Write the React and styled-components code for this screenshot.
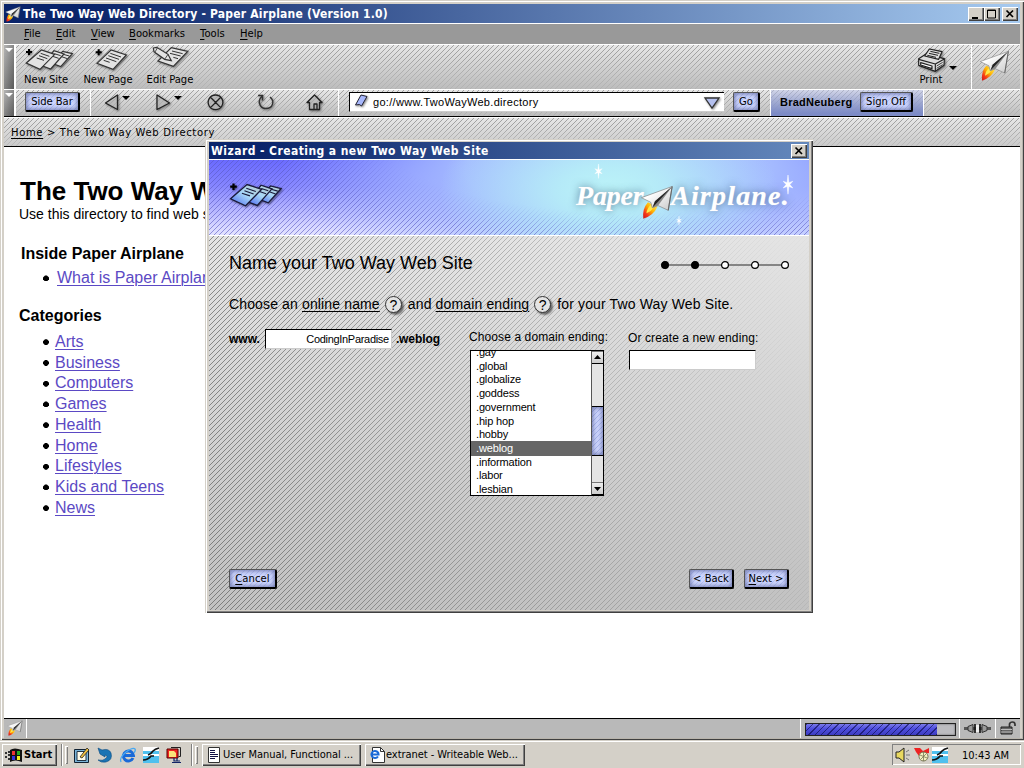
import React from 'react';
import styled, { createGlobalStyle, css } from 'styled-components';

const Global = createGlobalStyle`
  * { box-sizing: border-box; }
  body { margin: 0; background: #d4d0c8; color: #000; font-family: "Liberation Sans", Arial, sans-serif; }
  svg { display: block; flex: none; overflow: visible; }
`;

const ui = '"DejaVu Sans", Verdana, sans-serif';
const tahoma = '"DejaVu Sans Condensed", "DejaVu Sans", Tahoma, sans-serif';

const hatch = (color) =>
  `url("data:image/svg+xml,%3Csvg xmlns='http://www.w3.org/2000/svg' width='5' height='5' shape-rendering='crispEdges'%3E%3Cpath d='M0 4h1v1h-1zM1 3h1v1h-1zM2 2h1v1h-1zM3 1h1v1h-1zM4 0h1v1h-1z' fill='%23${color}'/%3E%3C/svg%3E")`;

const striped = css`
  position: relative;
  isolation: isolate;
  &::before {
    content: '';
    position: absolute;
    inset: 0;
    z-index: -1;
    background: ${hatch('a2a2a2')};
    mask-image: linear-gradient(#000 30%, rgba(0, 0, 0, 0.35));
  }
`;

const Screen = styled.div`
  width: 1024px;
  height: 768px;
  display: flex;
  flex-direction: column;
  overflow: hidden;
  position: relative;
`;
const Window = styled.div`
  height: 740px;
  padding: 4px 4px 2px;
  background: #d4d0c8;
  box-shadow: inset 1px 1px #d4d0c8, inset 2px 2px #fff, inset -1px -1px #404040, inset -2px -2px #b8b4ac;
  display: flex;
  flex-direction: column;
`;
const TitleBar = styled.div`
  height: ${(p) => p.$h || 20}px;
  flex: none;
  border-bottom: 1px solid #fff;
  background: linear-gradient(90deg, #0a246a 8%, ${(p) => p.$end || '#a6caf0'});
  display: flex;
  align-items: center;
  gap: 2px;
  padding: 0 2px 0 ${(p) => p.$pad ?? 1}px;
  color: #fff;
`;
const TitleText = styled.div`
  flex: 1;
  font: bold ${(p) => p.$size || 12}px/18px ${tahoma};
  letter-spacing: ${(p) => p.$ls || 0}px;
  white-space: nowrap;
`;
const Control = styled.div`
  width: 16px;
  height: 14px;
  margin-left: ${(p) => p.$gap || -2}px;
  background: #d4d0c8;
  box-shadow: inset 1px 1px #fff, inset -1px -1px #404040, inset -2px -2px #808080;
`;
const MenuBar = styled.div`
  height: 21px;
  flex: none;
  background: #999;
  border-bottom: 1px solid #fff;
  display: flex;
  padding-left: 20px;
  font: 10px/19px ${ui};
`;
const MenuItem = styled.div`
  width: ${(p) => p.$w}px;
  letter-spacing: ${(p) => p.$ls || 0}px;
`;
const Key = styled.span`
  text-decoration: underline;
  text-underline-offset: 2px;
  text-decoration-thickness: 1px;
`;
const Bar = styled.div`
  ${striped}
  height: ${(p) => p.$h}px;
  flex: none;
  display: flex;
  background: linear-gradient(#e6e6e6, ${(p) => p.$end || '#bcbcbc'});
  border-bottom: 1px solid ${(p) => p.$line || '#fff'};
  border-top: ${(p) => (p.$top ? '1px solid #fff' : '0')};
`;
const Grip = styled.div`
  width: 12px;
  border-right: 2px solid #fff;
  background: linear-gradient(90deg, rgba(255, 255, 255, 0.15), rgba(0, 0, 0, 0.2)), linear-gradient(#a8a8a8, #707070);
  padding: 3px 0 0 2px;
`;
const Tool = styled.div`
  width: ${(p) => p.$w}px;
  margin-left: ${(p) => p.$ml || 0}px;
  display: flex;
  flex-direction: column;
  align-items: ${(p) => p.$align || 'center'};
  font: 10px/12px ${ui};
  letter-spacing: ${(p) => p.$ls || 0}px;
  white-space: nowrap;
`;
const ToolIcon = styled.div`
  height: 29px;
  display: flex;
  align-items: flex-start;
  padding: 3px 0 0 ${(p) => p.$pl || 0}px;
`;
const Caret = styled.div`
  border: 4px solid transparent;
  border-top-color: ${(p) => p.$c || '#000'};
  border-bottom: 0;
  width: 0;
  height: 0;
  margin: ${(p) => p.$m || 0};
`;
const LogoCell = styled.div`
  margin-left: auto;
  width: 49px;
  border-left: 1px solid #fff;
  padding: 5px 0 0 7px;
`;
const Button = styled.div`
  flex: none;
  width: ${(p) => p.$w}px;
  height: 20px;
  border: 1px solid #000;
  border-top-color: #555;
  border-left-color: #555;
  border-right-width: 2px;
  border-bottom-width: 2px;
  border-radius: 2px;
  background: ${hatch('b4c0f4')} , #cdd5fd;
  box-shadow: inset 0 0 4px 1px rgba(50, 60, 120, 0.6);
  font: 10px/17px ${ui};
  letter-spacing: ${(p) => p.$ls || 0}px;
  text-align: center;
  white-space: nowrap;
`;
const NavGroup = styled.div`
  display: flex;
  align-items: flex-start;
  width: 249px;
  margin-left: 10px;
  padding-left: 13px;
  border: solid #fff;
  border-width: 0 1px;
`;
const Place = styled.div`
  width: ${(p) => p.$w}px;
  padding-top: ${(p) => p.$t || 0}px;
  padding-left: ${(p) => p.$l || 0}px;
  display: flex;
  gap: 3px;
`;
const Address = styled.div`
  width: 375px;
  height: 20px;
  margin: 2px 0 0 10px;
  background: #fff;
  border: solid #000;
  border-width: 1px 0 0 1px;
  border-bottom: 1px solid #ccc;
  display: flex;
  padding-left: 4px;
  font-size: 11px;
  line-height: 18px;
`;
const Url = styled.div`
  flex: 1;
  padding-left: 3px;
  letter-spacing: 0.3px;
`;
const Grow = styled.div`
  flex: 1;
`;
const Account = styled.div`
  width: 154px;
  margin-left: 10px;
  padding: 2px 0 0 9px;
  border: solid #fff;
  border-width: 0 1px;
  background: linear-gradient(rgba(190, 198, 236, 0.5), #7d8bc6 90%);
  display: flex;
`;
const Bold = styled.div`
  font-weight: bold;
  font-size: ${(p) => p.$size || 11}px;
  line-height: 20px;
  letter-spacing: ${(p) => p.$ls || 0}px;
  width: ${(p) => (p.$w ? p.$w + 'px' : 'auto')};
`;
const Crumbs = styled.div`
  font: 10px/14px ${ui};
  letter-spacing: 0.64px;
  padding: 8px 0 0 7px;
`;
const Content = styled.div`
  flex: 1;
  background: #fff;
  padding: 29px 0 0 15px;
  white-space: nowrap;
`;
const H1 = styled.div`
  font-weight: bold;
  font-size: 26px;
  line-height: 30px;
  padding-left: 1px;
`;
const Sub = styled.div`
  font-size: 14px;
  line-height: 16px;
`;
const H2 = styled.div`
  font-weight: bold;
  font-size: 16px;
  line-height: 20px;
  margin: ${(p) => p.$m};
`;
const List = styled.div`
  margin-left: ${(p) => p.$ml}px;
`;
const Entry = styled.div`
  display: flex;
  align-items: center;
  gap: ${(p) => p.$gap || 6}px;
  height: 20.75px;
  line-height: 20.75px;
  font-size: 16px;
  color: #5b49c4;
  text-decoration: underline;
  text-underline-offset: 2px;
  text-decoration-thickness: 1px;
  &::before {
    content: '';
    width: 6px;
    height: 6px;
    background: #000;
    clip-path: polygon(34% 0, 66% 0, 100% 34%, 100% 66%, 66% 100%, 34% 100%, 0 66%, 0 34%);
  }
`;
const StatusBar = styled.div`
  height: 20px;
  flex: none;
  background: #b9b9b9;
  border-top: 1px solid #000;
  display: flex;
`;
const StatusCell = styled.div`
  width: ${(p) => p.$w}px;
  flex: ${(p) => (p.$w ? 'none' : 1)};
  border: solid #fff;
  border-width: 0 ${(p) => (p.$r ? 1 : 0)}px 0 ${(p) => (p.$l ? 1 : 0)}px;
  padding: ${(p) => p.$p || 0};
`;
const Progress = styled.div`
  width: 151px;
  height: 13px;
  border: 1px solid #222;
  background: #bcbcc0;
  box-shadow: inset 0 0 2px #555;
`;
const ProgressFill = styled.div`
  width: 131px;
  height: 11px;
  background: repeating-linear-gradient(135deg, rgba(0, 0, 60, 0.55) 0 1px, transparent 1px 4.5px),
    linear-gradient(#7a7ae8, #5050e0 40%, #3c3cc0);
`;

const Dialog = styled.div`
  position: absolute;
  left: 205px;
  top: 139px;
  width: 608px;
  height: 474px;
  padding: 3px 4px;
  background: #d4d0c8;
  box-shadow: inset 1px 1px #d4d0c8, inset 2px 2px #fff, inset -1px -1px #404040, inset -2px -2px #808080;
  display: flex;
  flex-direction: column;
`;
const Banner = styled.div`
  position: relative;
  isolation: isolate;
  height: 76px;
  flex: none;
  border-bottom: 1px solid #fff;
  display: flex;
  background: radial-gradient(ellipse 170px 90px at 400px 32px, #bcf4f8, rgba(184, 244, 246, 0.8) 30%, rgba(184, 244, 246, 0)),
    radial-gradient(ellipse 340px 120px at 410px 10px, #acc8ff, #a4baff 45%, rgba(120, 124, 255, 0) 100%),
    linear-gradient(#6a6aff, #8686ff 35%, #d8d8ff 90%, #e2e2ff);
  &::before {
    content: '';
    position: absolute;
    inset: 0;
    z-index: -1;
    background: ${hatch('5a5ac4')};
    opacity: 0.6;
    mask-image: radial-gradient(ellipse 330px 90px at 430px -15px, transparent 75%, #000 105%);
  }
`;
const BannerIcon = styled.div`
  padding: 22px 0 0 19px;
`;
const Wordmark = styled.div`
  position: relative;
  display: flex;
  font: italic bold 28px/34px "Liberation Serif", "Times New Roman", serif;
  color: #fff;
  text-shadow: 0 0 9px rgba(50, 80, 120, 0.75), 0 0 1px #fff;
  margin: 19px 0 0 292px;
  height: 34px;
`;
const Word = styled.span`
  width: ${(p) => p.$w}px;
  letter-spacing: ${(p) => p.$ls}px;
`;
const Floating = styled.div`
  position: absolute;
  left: ${(p) => p.$x}px;
  top: ${(p) => p.$y}px;
`;
const Body = styled.div`
  ${striped}
  flex: 1;
  background: linear-gradient(#e4e4e4, #c4c4c4 90%, #c2c2c2);
  display: flex;
  flex-direction: column;
  padding: 0 20px 21px;
  white-space: nowrap;
  &::before {
    background: ${hatch('7c7c7c')};
    mask-image: linear-gradient(75deg, #000, rgba(0, 0, 0, 0.42) 60%, rgba(0, 0, 0, 0.04) 95%);
  }
`;
const TopRow = styled.div`
  display: flex;
  justify-content: space-between;
  padding-top: 15px;
`;
const StepTitle = styled.div`
  font-size: 18px;
  line-height: 24px;
`;
const Sentence = styled.div`
  display: flex;
  align-items: center;
  margin-top: 19px;
  height: 20px;
  font-size: 14px;
  line-height: 20px;
  letter-spacing: 0.14px;
`;
const Term = styled.span`
  text-decoration: underline;
  text-underline-offset: 2px;
  text-decoration-thickness: 1px;
  margin-left: 4px;
`;
const Help = styled.span`
  width: 17px;
  height: 17px;
  margin: 0 6px 0 5px;
  border: 1px solid #333;
  border-radius: 9px;
  background: #e4e4e4;
  box-shadow: 2px 2px 2px rgba(0, 0, 0, 0.5);
  font-size: 14px;
  line-height: 16px;
  letter-spacing: 0;
  text-align: center;
`;
const Fields = styled.div`
  display: flex;
  align-items: flex-start;
  margin-top: 14px;
  flex: 1;
`;
const NameRow = styled.div`
  display: flex;
  width: 240px;
  gap: 4px;
  padding-top: 1px;
`;
const Input = styled.div`
  width: 127px;
  height: 20px;
  margin-left: 1px;
  background: #fff;
  border-top: 1px solid #000;
  border-left: 1px solid #000;
  border-right: 1px solid #ccc;
  border-bottom: 1px solid #ccc;
  font-size: 11px;
  line-height: 18px;
  letter-spacing: -0.3px;
  text-align: right;
  padding-right: 2px;
`;
const Column = styled.div`
  width: ${(p) => p.$w}px;
  padding-top: ${(p) => p.$t || 0}px;
`;
const Label = styled.div`
  font-size: 12px;
  line-height: 18px;
  letter-spacing: 0.1px;
  margin-bottom: ${(p) => p.$mb}px;
`;
const ListBox = styled.div`
  width: 134px;
  height: 146px;
  margin-left: 1px;
  border: 1px solid #000;
  background: #fff;
  display: flex;
  overflow: hidden;
`;
const Options = styled.div`
  flex: 1;
  margin-top: -5px;
`;
const Option = styled.div`
  height: 13.72px;
  line-height: 13.72px;
  padding-left: 5px;
  font-size: 11px;
  letter-spacing: -0.15px;
  background: ${(p) => (p.$on ? '#666' : 'transparent')};
  color: ${(p) => (p.$on ? '#fff' : '#000')};
  box-shadow: ${(p) => (p.$on ? '0 -1px #666' : 'none')};
`;
const Scroll = styled.div`
  width: 12px;
  border-left: 1px solid #555;
  background: #e4e4e4;
  display: flex;
  flex-direction: column;
`;
const ScrollButton = styled.div`
  height: 13px;
  background: linear-gradient(#eee, #ccc);
  border-bottom: 1px solid #000;
  border-top: 1px solid #777;
  display: flex;
  align-items: center;
  justify-content: center;
`;
const Thumb = styled.div`
  height: 51px;
  margin: 42px 0 26px;
  border: solid #000;
  border-width: 1px 0 1px;
  background: ${hatch('a8b4ec')} , #ccd4fc;
  box-shadow: inset 0 0 4px 1px rgba(50, 60, 120, 0.6);
`;
const Footer = styled.div`
  display: flex;
  gap: 10px;
`;

const Taskbar = styled.div`
  height: 28px;
  flex: none;
  border-top: 1px solid #d4d0c8;
  box-shadow: inset 0 1px #fff;
  background: #d4d0c8;
  display: flex;
  align-items: flex-start;
  padding: 3px 2px 0;
  font: 11px/20px ${tahoma};
`;
const TaskButton = styled.div`
  width: ${(p) => p.$w}px;
  flex: none;
  height: 22px;
  margin-right: ${(p) => p.$mr || 0}px;
  padding-left: ${(p) => p.$pl || 4}px;
  display: flex;
  align-items: center;
  gap: 1px;
  box-shadow: inset 1px 1px #fff, inset -1px -1px #404040, inset -2px -2px #808080;
  font-weight: ${(p) => (p.$bold ? 'bold' : 'normal')};
  letter-spacing: ${(p) => p.$ls || 0}px;
  white-space: nowrap;
`;
const Divider = styled.div`
  width: 1px;
  height: 22px;
  background: #808080;
  box-shadow: 1px 0 #fff;
  margin-right: ${(p) => p.$mr}px;
`;
const Handle = styled.div`
  width: 3px;
  height: 18px;
  margin: 2px ${(p) => p.$mr}px 0 0;
  box-shadow: inset 1px 1px #fff, inset -1px -1px #808080;
`;
const Quick = styled.div`
  display: flex;
  gap: 7px;
  padding-top: 3px;
  width: 117px;
`;
const Tray = styled.div`
  margin-left: auto;
  margin-right: 1px;
  width: 129px;
  height: 21px;
  box-shadow: inset 1px 1px #808080, inset -1px -1px #fff;
  display: flex;
  align-items: center;
  padding-left: 3px;
  gap: 2px;
`;
const Clock = styled.div`
  margin-left: 12px;
  padding-top: 2px;
  white-space: nowrap;
`;

function Plane({ size = 30 }) {
  return (
    <svg width={size} height={size} viewBox="896 148 94 94">
      <defs>
        <linearGradient id="flame" x1="1" y1="0" x2="0" y2="1">
          <stop offset="0" stopColor="#fff36a" />
          <stop offset="0.45" stopColor="#ffb400" />
          <stop offset="0.75" stopColor="#f5361a" />
          <stop offset="1" stopColor="#c81818" />
        </linearGradient>
        <linearGradient id="wing" x1="0" y1="0" x2="1" y2="1">
          <stop offset="0.3" stopColor="#fff" />
          <stop offset="1" stopColor="#c9c9c9" />
        </linearGradient>
      </defs>
      <path d="M918 196 Q902 214 905 241 Q934 232 944 208 Z" fill="url(#flame)" />
      <path d="M924 204 Q914 216 914 226 Q928 220 936 208 Z" fill="#ffe94a" />
      <path d="M900 183 L985 152 L974 218 L946 205 L930 211 L926 196 Z" fill="url(#wing)" stroke="#888" strokeWidth="2" />
      <path d="M985 152 L946 205 L932 210 L936 194 Z" fill="#8a8a8a" />
      <path d="M985 152 L930 211 L938 192 Z" fill="#222" />
      <path d="M985 152 L974 218" stroke="#666" strokeWidth="3" />
    </svg>
  );
}

const shadow = { filter: 'drop-shadow(1px 1px 1px rgba(0,0,0,.5))' };

function Sheets({ blue }) {
  const fill = blue ? 'url(#sheet)' : '#e2e2e2';
  const ink = blue ? '#1a1a3a' : '#333';
  return (
    <svg width={blue ? 56 : 51} height={blue ? 27 : 24} viewBox="72 144 153 72" style={shadow}>
      <defs>
        <linearGradient id="sheet" x1="0" y1="1" x2="1" y2="0">
          <stop offset="0.1" stopColor="#5a7af0" />
          <stop offset="0.5" stopColor="#a8d8f8" />
          <stop offset="1" stopColor="#b8c8c8" />
        </linearGradient>
      </defs>
      <g fill={fill} stroke={ink} strokeWidth="3.5">
        <path d="M156 190 L188 154 L217 161 L182 200 Z" />
        <path d="M190 163 L208 168 M185 170 L202 176" strokeWidth="3" />
        <path d="M128 198 L162 152 L192 162 L152 207 Z" />
        <path d="M163 161 L182 167 M158 169 L176 175" strokeWidth="3" />
        <path d="M79 189 L124 150 L164 163 L120 208 Z" />
        <path d="M122 160 L148 169 M117 167 L142 176 M110 174 L132 181" strokeWidth="3" />
      </g>
      <path d="M78 156h18M87 147v18" stroke="#000" strokeWidth="6" />
    </svg>
  );
}

function NewPage() {
  return (
    <svg width="33" height="24" viewBox="290 144 99 72" style={shadow}>
      <g fill="#e2e2e2" stroke="#333" strokeWidth="3.5">
        <path d="M296 190 L338 150 L384 165 L344 208 Z" />
        <path d="M336 160 L368 171 M330 167 L362 178 M323 174 L354 185 M316 181 L334 187" strokeWidth="3" />
      </g>
      <path d="M292 157h18M301 148v18" stroke="#000" strokeWidth="6" />
    </svg>
  );
}

function EditPage() {
  return (
    <svg width="36" height="24" viewBox="444 144 108 72" style={shadow}>
      <g fill="#e2e2e2" stroke="#333" strokeWidth="3.5">
        <path d="M462 192 L502 152 L551 163 L508 208 Z" />
        <path d="M504 162 L536 170 M498 169 L530 177 M508 181 L522 185" strokeWidth="3" />
        <path d="M448 153 L458 151 L492 172 L502 191 L482 187 L450 164 Z" />
        <path d="M460 153 L453 165 M492 172 L482 187" strokeWidth="2.5" />
      </g>
    </svg>
  );
}

function Printer() {
  return (
    <svg width="27" height="24" viewBox="710 144 81 72" style={shadow}>
      <g fill="#dcdcdc" stroke="#222" strokeWidth="3.5" strokeLinejoin="round">
        <path d="M712 176 L733 163 L789 176 L788 196 L762 214 L712 196 Z" />
        <path d="M730 168 L744 147 L782 155 L772 178 Z" />
        <path d="M747 154 L774 160 M743 160 L770 166 M738 166 L764 172" strokeWidth="3" />
        <path d="M712 178 L762 192 L789 177 M762 192 V213" fill="none" />
        <path d="M718 188 L752 198 L752 206 L718 195 Z" fill="#fff" />
        <path d="M766 198 L784 187 M766 205 L784 194" strokeWidth="2.5" />
      </g>
    </svg>
  );
}

function Stroke({ w, h, d, sw = 1.3 }) {
  return (
    <svg width={w} height={h} viewBox={`0 0 ${w} ${h}`} style={shadow}>
      <path d={d} fill="#ddd" fillOpacity="0.5" stroke="#222" strokeWidth={sw} strokeLinejoin="round" />
    </svg>
  );
}

function Star({ size }) {
  return (
    <svg width={size} height={size * 1.6} viewBox="0 0 12 20">
      <path d="M6 0 L6.9 8 L11 6.500 L8 10 L11 13.500 L6.900 12 L6 20 L5.100 12 L1 13.500 L4 10 L1 6.500 L5.100 8 Z" fill="#fff" stroke="#fff" strokeWidth="0.5" />
    </svg>
  );
}

function Steps() {
  return (
    <svg width="130" height="12" viewBox="0 0 130 12" style={{ margin: '8px -1px 0 0' }}>
      <path d="M5 6H125" stroke="#666" strokeWidth="1.6" />
      {[5, 35, 65, 95, 125].map((x, i) => (
        <circle key={x} cx={x} cy="6" r="3.4" fill={i < 2 ? '#000' : '#fff'} stroke="#000" strokeWidth="1.2" />
      ))}
    </svg>
  );
}

const Cross = () => (
  <svg width="16" height="14" viewBox="0 0 16 14">
    <path d="M4.500 3.500 L11 10 M11 3.500 L4.500 10" stroke="#000" strokeWidth="1.7" />
  </svg>
);

const IE = () => (
  <svg width="16" height="16" viewBox="0 0 16 16">
    <path d="M13 11 A5 5 0 1 1 13.400 8.500 H5" fill="none" stroke="#1a6ad8" strokeWidth="3" />
    <path d="M1 15 Q-1 11 6 5 Q13 0 15 2 Q16 3 14 6" fill="none" stroke="#48a8f0" strokeWidth="1.3" />
  </svg>
);
const Swoosh = () => (
  <svg width="16" height="16" viewBox="0 0 16 16">
    <path d="M0 0h16v16H0z" fill="#fff" />
    <path d="M0 4h16v3H0zM0 9h16v7H0z" fill="#4fc0ee" />
    <path d="M0 13 Q5 13 8 9 H11 M5 8 Q8 7 10 4 Q12 2 16 1" fill="none" stroke="#111" strokeWidth="1.7" />
  </svg>
);

const categories = ['Arts', 'Business', 'Computers', 'Games', 'Health', 'Home', 'Lifestyles', 'Kids and Teens', 'News'];
const endings = ['.gay', '.global', '.globalize', '.goddess', '.government', '.hip hop', '.hobby', '.weblog', '.information', '.labor', '.lesbian'];
const menu = [['File', 32], ['Edit', 35], ['View', 38], ['Bookmarks', 71], ['Tools', 40], ['Help', 40]];

export default function App() {
  return (
    <Screen>
      <Global />
      <Window>
        <TitleBar>
          <Plane size={16} />
          <TitleText $ls={0.2}>The Two Way Web Directory - Paper Airplane (Version 1.0)</TitleText>
          <Control>
            <svg width="16" height="14"><path d="M4 10h6v2H4z" /></svg>
          </Control>
          <Control>
            <svg width="16" height="14"><path d="M3.500 3h8v8h-8zM3 3.500h9" fill="none" stroke="#000" /></svg>
          </Control>
          <Control $gap={0.01}><Cross /></Control>
        </TitleBar>
        <MenuBar>
          {menu.map(([t, w]) => (
            <MenuItem key={t} $w={w}><Key>{t[0]}</Key>{t.slice(1)}</MenuItem>
          ))}
        </MenuBar>
        <Bar $h={45}>
          <Grip><Caret $c="#fff" $m="0 0 0 -1px" /></Grip>
          <Tool $w={51} $ml={8} $align="flex-start"><ToolIcon><Sheets /></ToolIcon>New Site</Tool>
          <Tool $w={50} $ml={8}><ToolIcon $pl={6}><NewPage /></ToolIcon>New Page</Tool>
          <Tool $w={50} $ml={12}><ToolIcon $pl={-4}><EditPage /></ToolIcon>Edit Page</Tool>
          <Tool $w={28} $ml={722}><ToolIcon><Printer /></ToolIcon>Print</Tool>
          <Caret $m="21px 0 0 4px" />
          <LogoCell><Plane size={31} /></LogoCell>
        </Bar>
        <Bar $h={27} $line="#000">
          <Grip><Caret $c="#fff" $m="0 0 0 -1px" /></Grip>
          <Place $w={64} $t={2} $l={9}><Button $w={55} $ls={-0.05}>Side Bar</Button></Place>
          <NavGroup>
            <Place $w={52} $t={4}><Stroke w={15} h={17} d="M13.500 1 V15.500 L1.500 9 Z" /><Caret $m="2px 0 0" /></Place>
            <Place $w={51} $t={4}><Stroke w={15} h={17} d="M1 1 V15.500 L13.500 9 Z" /><Caret $m="2px 0 0" /></Place>
            <Place $w={50} $t={4}><Stroke w={17} h={17} d="M8.500 1 a7.300 7.300 0 1 0 .01 0 M3.500 3.300 L13.700 13.600 M13.700 3.300 L3.500 13.600" /></Place>
            <Place $w={49} $t={4}>
              <svg width="18" height="17" viewBox="0 0 18 17" style={shadow}>
                <path d="M1 1.500H5.500V6.500M5.500 2C0 6 2 14.500 9 14.500S18 7 13 3" fill="none" stroke="#333" strokeWidth="1.4" />
              </svg>
            </Place>
            <Place $w={18} $t={4}><Stroke w={17} h={17} d="M1 8.500 L8.500 1 L16 8.500 H13.500 V15.500 H3.500 V8.500 Z M8 15 V10 H11 V15" /></Place>
          </NavGroup>
          <Address>
            <svg width="16" height="17" viewBox="0 0 16 17" style={shadow}>
              <path d="M7 2 L13 3.500 L7.500 13 L5.500 11.500 L1.500 12 Z" fill="#a8b8fc" stroke="#223" />
            </svg>
            <Url>go://www.TwoWayWeb.directory</Url>
            <svg width="22" height="18" viewBox="0 0 22 18" style={shadow}>
              <path d="M3 5 H17 L10 15 Z" fill="#b4c0ee" stroke="#333" strokeWidth="1.3" />
            </svg>
          </Address>
          <Place $w={36} $t={2} $l={9}><Button $w={27}>Go</Button></Place>
          <Account>
            <Bold $w={80} $ls={0.25}>BradNeuberg</Bold>
            <Button $w={53}>Sign Off</Button>
          </Account>
        </Bar>
        <Bar $h={30} $line="#000" $top $end="#cacaca">
          <Crumbs><Key>Home</Key> &gt; The Two Way Web Directory</Crumbs>
        </Bar>
        <Content>
          <H1>The Two Way Web Directory</H1>
          <Sub>Use this directory to find web sites</Sub>
          <H2 $m="22px 0 4px 2px">Inside Paper Airplane</H2>
          <List $ml={24}><Entry $gap={8}>What is Paper Airplane?</Entry></List>
          <H2 $m="17px 0 6px 0">Categories</H2>
          <List $ml={24}>{categories.map((c) => <Entry key={c}>{c}</Entry>)}</List>
        </Content>
        <StatusBar>
          <StatusCell $w={23} $r $p="1px 0 0 3px"><Plane size={16} /></StatusCell>
          <StatusCell />
          <StatusCell $w={159} $l $p="4px 0 0 4px"><Progress><ProgressFill /></Progress></StatusCell>
          <StatusCell $w={36} $l $p="5px 0 0 4px">
            <svg width="27" height="9" viewBox="0 0 27 9">
              <path d="M0 4.500H27" stroke="#555" strokeWidth="3" />
              <path d="M4 2.500L9 .5V8.500L4 6.500zM23 2.500L18 .5V8.500L23 6.500z" fill="#999" stroke="#333" />
              <path d="M11 0v9M16 0v9" stroke="#111" strokeWidth="1.6" /><path d="M12 1h3v7h-3z" fill="#eee" />
            </svg>
          </StatusCell>
          <StatusCell $w={25} $l $p="2px 0 0 4px">
            <svg width="17" height="14" viewBox="0 0 17 14">
              <path d="M9.500 6 V3 Q10 1 12.500 1 Q15 1 15 3.500 V5" fill="none" stroke="#333" strokeWidth="1.7" />
              <path d="M1 6h11v7H1z" fill="#666" stroke="#222" /><path d="M1 8.500h11M1 11h11" stroke="#bbb" />
            </svg>
          </StatusCell>
        </StatusBar>
      </Window>

      <Taskbar>
        <TaskButton $w={55} $pl={3} $mr={4} $bold>
          <svg width="18" height="15" viewBox="0 0 18 15">
            <path d="M0 4h2v2H0zM0 8h2v2H0zM3 3h2v2H3zM3 6h2v2H3zM3 10h2v2H3z" fill="#333" />
            <path d="M5 2 Q9 -1 17 2 V14 Q10 11 5 14 Z" fill="#111" />
            <path d="M7 3h3v4H7z" fill="#e33" /><path d="M12 3h3v4h-3z" fill="#2a2" />
            <path d="M7 8h3v4H7z" fill="#33d" /><path d="M12 8h3v4h-3z" fill="#ee2" />
          </svg>
          Start
        </TaskButton>
        <Divider $mr={3} />
        <Handle $mr={6} />
        <Quick>
          <svg width="16" height="16" viewBox="0 0 16 16">
            <path d="M.5 2.500h14v13h-14z" fill="#7ab4d8" stroke="#123" /><path d="M3 4.500h9v9H3z" fill="#fffbe8" stroke="#234" />
            <path d="M6 10 L13 1 L15 3 L8 11 Z" fill="#f0c040" stroke="#222" strokeWidth=".8" />
          </svg>
          <svg width="16" height="16" viewBox="0 0 16 16">
            <path d="M1 1 L5 3 Q12 1 14 6 Q16 13 9 15 Q4 16 1 13 Q6 14 8 12 Q12 9 8 8 L8 10 L3 7 Z" fill="#1b74b4" stroke="#0a4a80" strokeWidth=".6" />
          </svg>
          <IE />
          <Swoosh />
          <svg width="16" height="16" viewBox="0 0 16 16">
            <path d="M1 2h11v9H1z" fill="#e22" stroke="#500" /><path d="M5 .5h9.500v9h-2" fill="none" stroke="#222" />
            <path d="M3 4h5l2 2v4H3z" fill="#fbe27a" /><path d="M8 11v3h6M11 11v3M6 15.500h9" stroke="#126" fill="none" strokeWidth="1.2" />
          </svg>
        </Quick>
        <Divider $mr={3} />
        <Handle $mr={4} />
        <TaskButton $w={159} $mr={4} $ls={-0.05}>
          <svg width="16" height="16" viewBox="0 0 16 16">
            <path d="M2.500 .5h11v15h-11z" fill="#fff" stroke="#333" />
            <path d="M4 3.500h5M4 5.500h5M4 7.500h8M4 9.500h8M4 11.500h5" stroke="#114" />
          </svg>
          User Manual, Functional ...
        </TaskButton>
        <TaskButton $w={160} $ls={-0.05}>
          <svg width="16" height="16" viewBox="0 0 16 16">
            <path d="M3.500 .5h8l4 4v11h-12z" fill="#fff" stroke="#333" /><path d="M11.500 .5v4h4" fill="none" stroke="#333" />
            <path d="M9 9.500 A3.600 3.600 0 1 1 9.600 7.500 H3" fill="none" stroke="#1a6ad8" strokeWidth="2" />
          </svg>
          extranet - Writeable Web...
        </TaskButton>
        <Tray>
          <svg width="17" height="16" viewBox="0 0 17 16">
            <path d="M1 5h3l5-4v14l-5-4H1z" fill="#e8d860" stroke="#222" /><path d="M11 5l3-2M11 8h4M11 11l3 2" stroke="#777" />
          </svg>
          <svg width="16" height="16" viewBox="0 0 16 16">
            <path d="M0 1h6l3 3 6-3v5l-6 1-4 2-3-4z" fill="#e22" /><circle cx="9.500" cy="9.500" r="4.500" fill="#f4f0c0" stroke="#775" />
            <path d="M6 8l7 3M7 12l5-5M9.500 5v9" stroke="#775" strokeWidth=".8" />
          </svg>
          <Swoosh />
          <Clock>10:43 AM</Clock>
        </Tray>
      </Taskbar>

      <Dialog>
        <TitleBar $h={18} $end="#6488bc" $pad={2}>
          <TitleText $ls={0.43}>Wizard - Creating a new Two Way Web Site</TitleText>
          <Control><Cross /></Control>
        </TitleBar>
        <Banner>
          <BannerIcon><Sheets blue /></BannerIcon>
          <Wordmark>
            <Word $w={95} $ls={-0.2}>Paper</Word>
            <Word $w={122} $ls={1.2}>Airplane.</Word>
            <Floating $x={64} $y={6}><Plane size={34} /></Floating>
          </Wordmark>
          <Floating $x={385} $y={4}><Star size={9} /></Floating>
          <Floating $x={573} $y={15}><Star size={12} /></Floating>
          <Floating $x={467} $y={56}><Star size={6} /></Floating>
        </Banner>
        <Body>
          <TopRow>
            <StepTitle>Name your Two Way Web Site</StepTitle>
            <Steps />
          </TopRow>
          <Sentence>
            Choose an <Term>online name</Term><Help>?</Help>and <Term>domain ending</Term><Help>?</Help>for your Two Way Web Site.
          </Sentence>
          <Fields>
            <NameRow>
              <Bold $size={12}>www.</Bold>
              <Input>CodingInParadise</Input>
              <Bold $size={12} $ls={-0.1}>.weblog</Bold>
            </NameRow>
            <Column $w={159}>
              <Label $mb={4}>Choose a domain ending:</Label>
              <ListBox>
                <Options>{endings.map((e) => <Option key={e} $on={e === '.weblog'}>{e}</Option>)}</Options>
                <Scroll>
                  <ScrollButton><svg width="7" height="4"><path d="M0 4L3.500 0L7 4z" /></svg></ScrollButton>
                  <Thumb />
                  <ScrollButton><svg width="7" height="4"><path d="M0 0L3.500 4L7 0z" /></svg></ScrollButton>
                </Scroll>
              </ListBox>
            </Column>
            <Column $w={140} $t={1}>
              <Label $mb={3}>Or create a new ending:</Label>
              <Input />
            </Column>
          </Fields>
          <Footer>
            <Button $w={48} $ls={0.1}><Key>C</Key>ancel</Button>
            <Grow />
            <Button $w={45}>&lt; Back</Button>
            <Button $w={45}><Key>N</Key>ext &gt;</Button>
          </Footer>
        </Body>
      </Dialog>
    </Screen>
  );
}
